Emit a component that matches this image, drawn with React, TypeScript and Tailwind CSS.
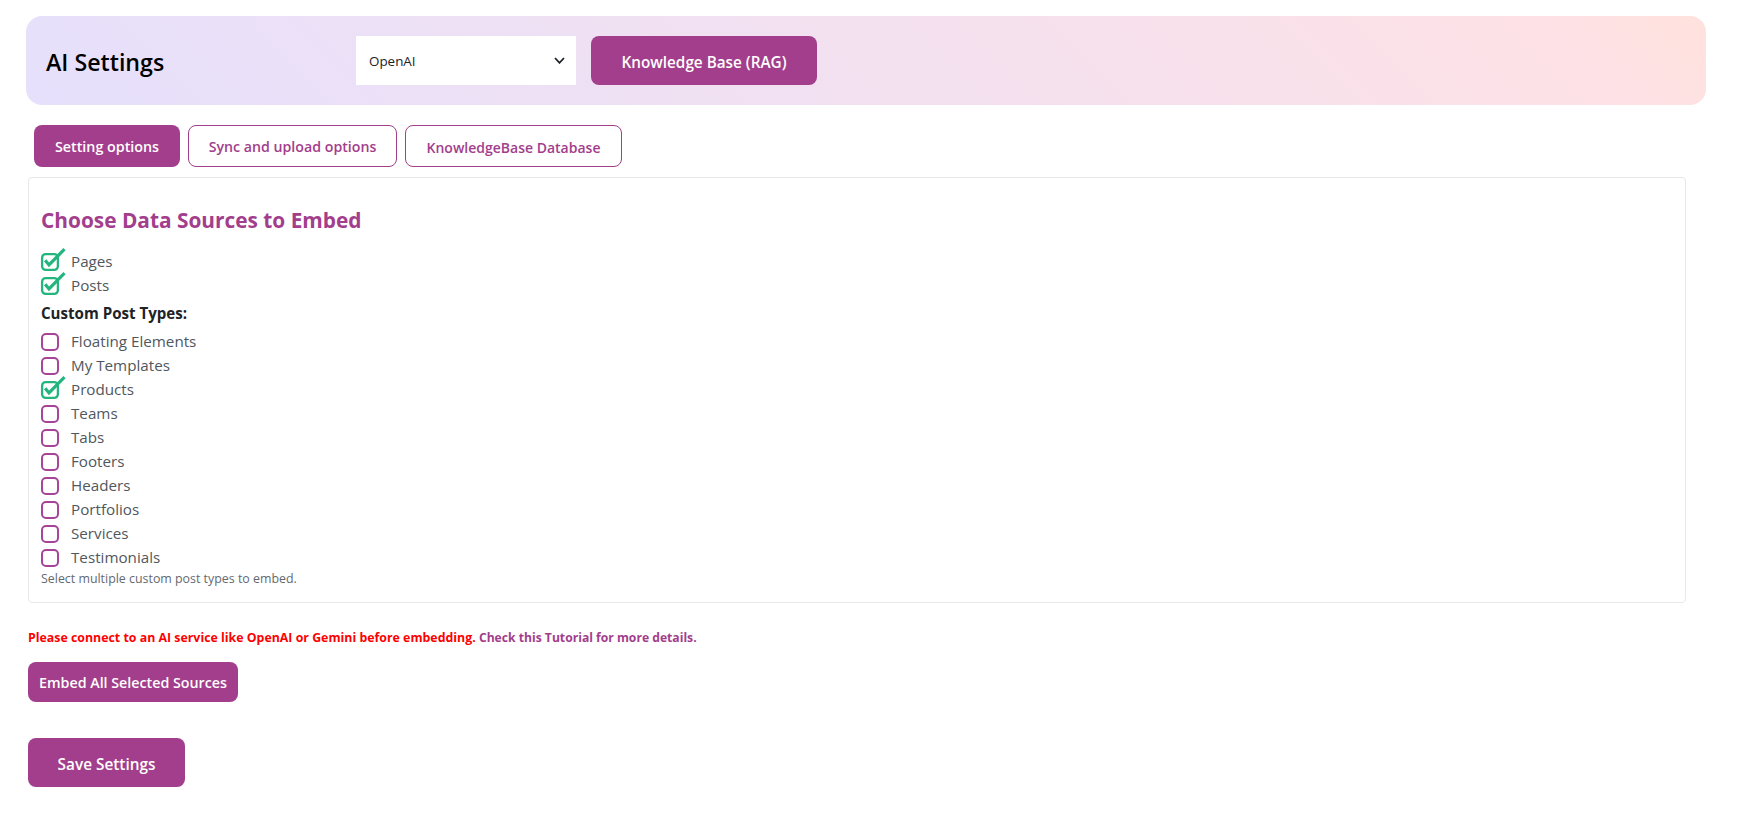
const labels = ["Floating Elements","My Templates","Products","Teams","Tabs","Footers","Headers","Portfolios","Services","Testimonials"];
const checked = new Set(["Products"]);

function Box({ on }: { on: boolean }) {
  if (!on) return <span className="block w-[18px] h-[18px] shrink-0 rounded-[5px] border-2 border-[#a8439a] bg-white" />;
  return (
    <svg width="18" height="18" viewBox="0 0 18 18" className="block shrink-0 overflow-visible" fill="none">
      <rect x="1.1" y="1.1" width="15.8" height="15.8" rx="3.6" stroke="#24b47e" strokeWidth="2.3" />
      <path d="M4.2 7.2 L8 11.9 L23.5 -3.8" stroke="#24b47e" strokeWidth="3.2" />
    </svg>
  );
}

function Row({ label, on }: { label: string; on: boolean }) {
  return (
    <label className="flex items-center h-6 gap-3 text-[15.2px] text-[#50575e]">
      <Box on={on} />
      <span className="pb-0.5">{label}</span>
    </label>
  );
}

export default function App() {
  return (
    <div className="min-h-[820px] bg-white pt-4 font-['Open_Sans',sans-serif] text-black">
      <div className="ml-[26px] w-[1680px] h-[89px] rounded-[16px] bg-[linear-gradient(45deg,#e6e0fc,#fde1e6_90%,#ffe2dd)] flex items-center pl-5">
        <h1 className="w-[310px] pt-0.5 text-[23.2px] font-semibold leading-8">AI Settings</h1>
        <div className="relative w-[220px] h-[49px] bg-white">
          <select className="appearance-none w-full h-full bg-transparent pl-[13px] pt-0.5 text-[13.4px] text-[#1d2327] outline-none">
            <option>OpenAI</option>
          </select>
          <svg className="absolute right-[11px] top-[21px]" width="11" height="7" viewBox="0 0 11 7" fill="none">
            <path d="M1 1 L5.5 5.8 L10 1" stroke="#1d2327" strokeWidth="1.8" />
          </svg>
        </div>
        <button className="ml-[15px] w-[226px] h-[49px] pt-1 rounded-lg bg-[#a23e8c] text-white text-[15.3px] font-semibold">Knowledge Base (RAG)</button>
      </div>

      <div className="ml-[34px] mt-5 flex gap-2">
        <button className="w-[146px] h-[42px] pt-0.5 rounded-lg bg-[#a23e8c] text-white text-[14.3px] font-semibold">Setting options</button>
        <button className="w-[209px] h-[42px] pt-0.5 rounded-lg border border-[#a23e8c] bg-white text-[#a23e8c] text-[14.2px] font-semibold">Sync and upload options</button>
        <button className="w-[217px] h-[42px] pt-0.5 rounded-lg border border-[#a23e8c] bg-white text-[#a23e8c] text-[14px] font-semibold">KnowledgeBase Database</button>
      </div>

      <div className="ml-[28px] mt-[10px] w-[1658px] h-[426px] rounded-[4px] border border-[#e8e8ea] bg-white pl-3 pt-[27px]">
        <h2 className="text-[20.85px] leading-[30px] font-bold text-[#a23e8c]">Choose Data Sources to Embed</h2>
        <div className="mt-[15px]">
          <Row label="Pages" on />
          <Row label="Posts" on />
        </div>
        <div className="h-8 pb-0.5 flex items-center text-[15.1px] font-bold text-[#1d2327]">Custom Post Types:</div>
        {labels.map((l) => <Row key={l} label={l} on={checked.has(l)} />)}
        <p className="pt-px text-[12.4px] leading-4 text-[#646970]">Select multiple custom post types to embed.</p>
      </div>

      <p className="ml-[28px] mt-[25px] text-[12.37px] leading-5 font-bold text-[#ff0000]">
        Please connect to an AI service like OpenAI or Gemini before embedding. <span className="text-[12.15px] text-[#a23e8c]">Check this Tutorial for more details.</span>
      </p>
      <button className="block ml-[28px] mt-[14px] w-[210px] h-10 pt-0.5 rounded-lg bg-[#a23e8c] text-white text-[14.25px] font-semibold">Embed All Selected Sources</button>
      <button className="block ml-[28px] mt-9 w-[157px] h-[49px] pt-1 rounded-lg bg-[#a23e8c] text-white text-[15.35px] font-semibold">Save Settings</button>
    </div>
  );
}
